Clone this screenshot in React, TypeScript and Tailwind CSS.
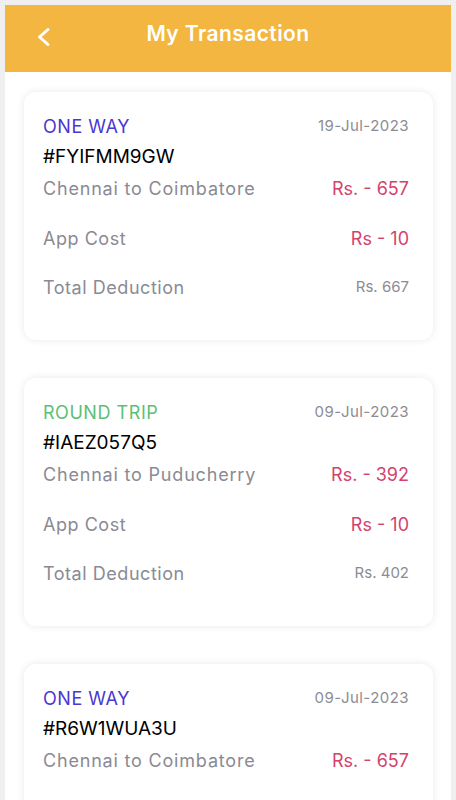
type Txn = {
  kind: "ONE WAY" | "ROUND TRIP";
  date: string;
  code: string;
  route: string;
  fare: string;
  appCost: string;
  total: string;
};

const txns: Txn[] = [
  {
    kind: "ONE WAY",
    date: "19-Jul-2023",
    code: "#FYIFMM9GW",
    route: "Chennai to Coimbatore",
    fare: "Rs. - 657",
    appCost: "Rs - 10",
    total: "Rs. 667",
  },
  {
    kind: "ROUND TRIP",
    date: "09-Jul-2023",
    code: "#IAEZ057Q5",
    route: "Chennai to Puducherry",
    fare: "Rs. - 392",
    appCost: "Rs - 10",
    total: "Rs. 402",
  },
  {
    kind: "ONE WAY",
    date: "09-Jul-2023",
    code: "#R6W1WUA3U",
    route: "Chennai to Coimbatore",
    fare: "Rs. - 657",
    appCost: "Rs - 10",
    total: "Rs. 667",
  },
];

function TxnCard({ t }: { t: Txn }) {
  return (
    <div className="rounded-xl bg-white pl-[19px] pr-6 pt-[19px] pb-[37px] shadow-[0_0_8px_rgba(0,0,0,0.09)]">
      <div className="flex h-[31px] items-center justify-between">
        <span
          className={
            t.kind === "ONE WAY"
              ? "text-[18px] tracking-[0.03em] text-[#4b36d1]"
              : "text-[18px] tracking-[0.03em] text-[#5cbf74]"
          }
        >
          {t.kind}
        </span>
        <span className="text-[15px] tracking-[0.03em] text-[#8c8c94]">{t.date}</span>
      </div>
      <div className="flex h-[31px] items-center text-[19px] text-black">{t.code}</div>
      <div className="flex h-[31px] items-center justify-between">
        <span className="text-[18px] tracking-[0.045em] text-[#8a8a93]">{t.route}</span>
        <span className="text-[18px] text-[#d4426c]">{t.fare}</span>
      </div>
      <div className="mt-[19px] flex h-[31px] items-center justify-between">
        <span className="text-[18px] tracking-[0.03em] text-[#8a8a93]">App Cost</span>
        <span className="text-[18px] text-[#d4426c]">{t.appCost}</span>
      </div>
      <div className="mt-[18px] flex h-[31px] items-center justify-between">
        <span className="text-[18px] tracking-[0.03em] text-[#8a8a93]">Total Deduction</span>
        <span className="text-[15px] text-[#8c8c94]">{t.total}</span>
      </div>
    </div>
  );
}

export default function App() {
  return (
    <div className="h-[800px] overflow-hidden bg-[#efefef] px-[5px] pt-[5px] font-['Inter','Open_Sans',sans-serif]">
      <div className="h-[795px] overflow-hidden bg-white">
        <header className="relative flex h-[67px] items-center justify-center bg-[#f3b640] pb-[9px]">
          <button className="absolute left-[30px] top-[21px] flex text-white">
            <svg className="block" width="18" height="22" viewBox="0 0 18 22" fill="none">
              <polyline
                points="13,3.5 4.5,11 13,18.5"
                stroke="currentColor"
                strokeWidth="3"
                strokeLinecap="round"
                strokeLinejoin="round"
              />
            </svg>
          </button>
          <h1 className="text-[21px] font-semibold tracking-[0.02em] text-white">My Transaction</h1>
        </header>
        <div className="flex flex-col gap-[38px] pl-[19px] pr-[18px] pt-5">
          {txns.map((t, i) => (
            <TxnCard key={i} t={t} />
          ))}
        </div>
      </div>
    </div>
  );
}
